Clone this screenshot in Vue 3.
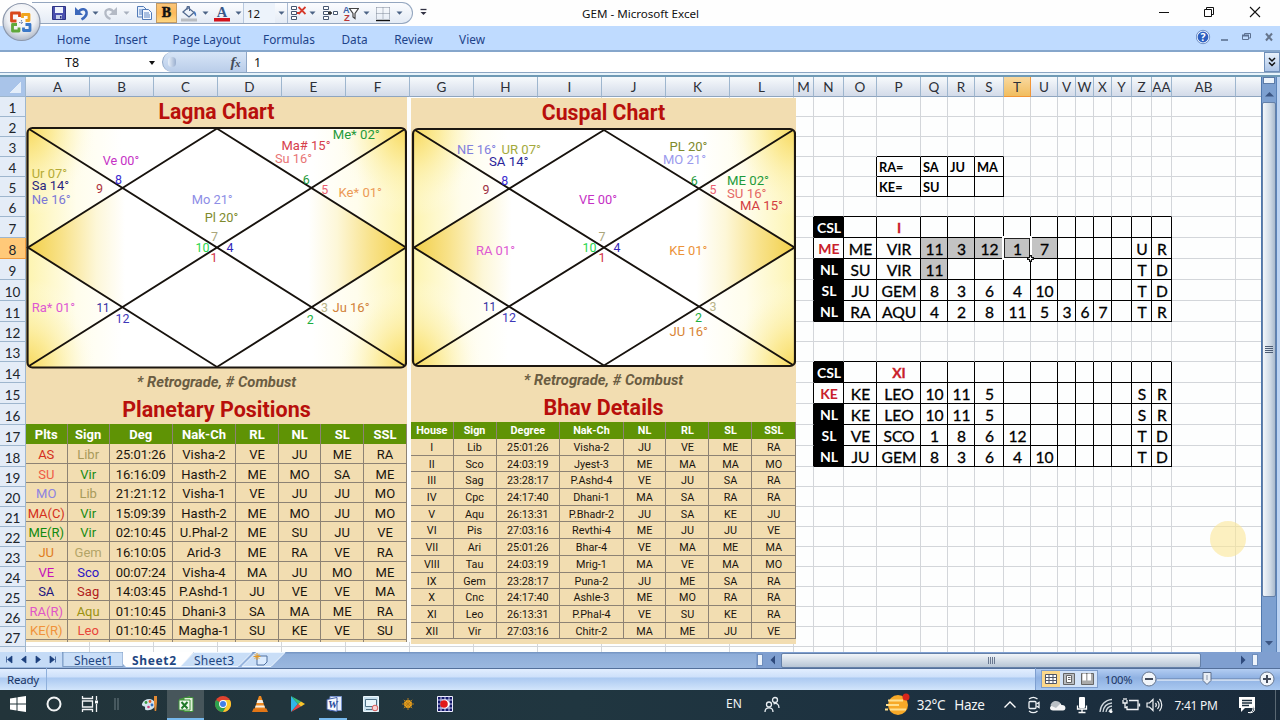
<template>
    <div class="excel">
        <!-- Заголовок окна и панель быстрого доступа -->
        <header class="title-bar">
            <div class="quick-access">
                <span
                    v-for="(item, i) in quickItems"
                    :key="i"
                    :class="['quick-item', item.kind]"
                    :style="{ width: item.w + 'px' }"
                >
                    <svg v-if="item.svg" :width="item.size || 16" height="18" :viewBox="`0 0 ${item.size || 16} 18`" v-html="item.svg"></svg>
                    <template v-else>{{ item.text }}</template>
                </span>
            </div>
            <svg class="customize" width="10" height="10" viewBox="0 0 10 10"><path d="M1.500 1.500h6" stroke="#334" stroke-width="1.300" /><path d="M1.500 4h6l-3 3z" fill="#334" /></svg>
            <div class="window-title">GEM - Microsoft Excel</div>
            <div class="window-buttons">
                <svg width="45" height="24" viewBox="0 0 45 24"><path d="M17 12.500h10" stroke="#111" /></svg>
                <svg width="45" height="24" viewBox="0 0 45 24"><path d="M17.500 9.500h7v7h-7zM19.500 9v-1.500h7v7H25" fill="none" stroke="#111" /></svg>
                <svg width="46" height="24" viewBox="0 0 46 24"><path d="M18 7l10 10M28 7L18 17" stroke="#111" stroke-width="1.100" /></svg>
            </div>
        </header>

        <!-- Кнопка Office -->
        <svg class="office-button" width="42" height="42" viewBox="0 0 42 42">
            <defs>
                <radialGradient id="orb" cx="50%" cy="35%" r="65%">
                    <stop offset="0" stop-color="#fff" />
                    <stop offset=".6" stop-color="#eef0f4" />
                    <stop offset="1" stop-color="#aeb8c8" />
                </radialGradient>
            </defs>
            <circle cx="21.500" cy="21" r="18.500" fill="url(#orb)" stroke="#8c97ab" stroke-width="1.200" />
            <g fill="none" stroke-width="2.800" stroke-linejoin="round">
                <path d="M16.500 20H11.500v-8h8v4" stroke="#d9481c" />
                <path d="M22.500 17v-3.500h6.500v6h-3.500" stroke="#f0a51e" />
                <path d="M17 23.500h-4.500v6.500h6.500v-3.500" stroke="#5fa83a" />
                <path d="M25.500 23.500h4.500v6h-6.500v-3" stroke="#3b78c8" />
            </g>
            <path d="M19 21.500h5M21.500 19v5" stroke="#7a8fb5" stroke-width="1.200" stroke-dasharray="1.500 1" />
        </svg>

        <nav class="ribbon">
            <span v-for="tab in ribbonTabs" :key="tab.name" class="ribbon-tab" :style="{ width: tab.w + 'px' }">{{ tab.name }}</span>
            <svg class="ribbon-controls" width="84" height="24" viewBox="0 0 84 24">
                <circle cx="7" cy="11" r="6" fill="#2c5fc0" stroke="#e9f2ff" stroke-width="1.200" />
                <circle cx="7" cy="11" r="6.700" fill="none" stroke="#4a6fae" stroke-width=".7" />
                <text x="7" y="15" text-anchor="middle" font-size="10.500" font-weight="700" fill="#fff">?</text>
                <path d="M25 14h7" stroke="#5c7191" stroke-width="1.600" />
                <path d="M46.500 9.500h6v4h-6zM48.500 9V7.500h6v4.500H53" fill="none" stroke="#5c7191" /><path d="M46 9.500h7" stroke="#5c7191" stroke-width="2" />
                <path d="M70 7.500l6 7M76 7.500l-6 7" stroke="#66758c" stroke-width="2" />
            </svg>
        </nav>

        <!-- Строка формул -->
        <div class="formula-bar">
            <div class="name-box"><span>T8</span><i class="drop"></i></div>
            <div class="fx-area">
                <i class="knob"></i>
                <span class="fx">f<small>x</small></span>
            </div>
            <div class="formula-text">1</div>
            <div class="expand"><svg width="10" height="12" viewBox="0 0 10 12"><path d="M2 2l3 3 3-3M2 6.500l3 3 3-3" fill="none" stroke="#111" stroke-width="1.500" /></svg></div>
        </div>

        <div class="sheet-area">
            <div class="sheet">
                <div class="col-heads">
                    <span class="corner"></span>
                    <span v-for="col in cols" :key="col.name" :class="['col-head', { active: col.name === 'T' }]" :style="{ width: col.w + 'px' }">{{ col.name }}</span>
                </div>
                <div class="rows">
                    <div v-for="row in rows" :key="row.n" class="row" :style="{ height: row.h + 'px' }">
                        <span :class="['row-head', { active: row.n === 8, tall: row.h === 21 }]">{{ row.n < 28 ? row.n : '' }}</span>
                        <span
                            v-for="cell in row.cells"
                            :key="cell.key"
                            :class="cell.cls"
                            :style="{ width: cell.w + 'px' }"
                        >{{ cell.text }}</span>
                    </div>

                    <!-- Картинки с гороскопами поверх ячеек -->
                    <section class="picture lagna">
                        <h2>Lagna Chart</h2>
                        <svg class="chart" width="381" height="243" viewBox="26 126 381 243">
                            <defs>
                                <linearGradient id="side-l"><stop offset="0" stop-color="#f2cf48" /><stop offset=".3" stop-color="#f8e28a" /><stop offset=".6" stop-color="#fdf7d8" /><stop offset=".85" stop-color="#fff" /></linearGradient>
                                <linearGradient id="side-r"><stop offset=".15" stop-color="#fff" /><stop offset=".4" stop-color="#fdf7d8" /><stop offset=".7" stop-color="#f8e28a" /><stop offset="1" stop-color="#f2cf48" /></linearGradient>
                                <linearGradient id="edges"><stop offset="0" stop-color="#fdf4b0" /><stop offset=".13" stop-color="#fffdec" /><stop offset=".25" stop-color="#fff" /><stop offset=".75" stop-color="#fff" /><stop offset=".87" stop-color="#fffdec" /><stop offset="1" stop-color="#fdf4b0" /></linearGradient>
                                <radialGradient id="corner-glow"><stop offset="0" stop-color="#f7d85c" /><stop offset=".35" stop-color="#fbe88e" stop-opacity=".8" /><stop offset=".7" stop-color="#fdf4c0" stop-opacity=".4" /><stop offset="1" stop-color="#fff" stop-opacity="0" /></radialGradient>
                                <clipPath id="clip-lagna"><rect x="27.500" y="128" width="378" height="239" rx="5" /></clipPath>
                            </defs>
                            <g clip-path="url(#clip-lagna)">
                                <rect x="27" y="127" width="380" height="241" fill="url(#edges)" />
                                <ellipse v-for="(c, i) in corners(27, 406, 128, 367)" :key="i" :cx="c[0]" :cy="c[1]" rx="72" ry="88" fill="url(#corner-glow)" />
                                <path d="M28 247.500L122 188l95 59.500L122 307z" fill="#fff" /><path d="M406 247.500L311 188l-94 59.500L311 307z" fill="#fff" />
                                <path d="M28 247.500L122 188l20 12.500v94L122 307z" fill="url(#side-l)" />
                                <path d="M406 247.500L311 188l-20 12.500v94L311 307z" fill="url(#side-r)" />
                                <path d="M217 128L122 188l95 59.500L311 188zM217 247.500L122 307l95 60 94-60z" fill="#fff" />
                            </g>
                            <path d="M29 129L405 366M405 129L29 366M217 128.500L28 247.500 217 367 406 247.500z" fill="none" stroke="#17120d" stroke-width="1.900" />
                            <rect x="27.500" y="128" width="378.500" height="239.500" rx="5" fill="none" stroke="#1d1710" stroke-width="2.200" />
                            <text v-for="(t, i) in lagnaLabels" :key="i" :x="t[1]" :y="t[2]" :fill="t[3]" :textLength="t[4]" lengthAdjust="spacingAndGlyphs">{{ t[0] }}</text>
                        </svg>
                        <p class="note">* Retrograde, # Combust</p>
                        <h2 class="sub">Planetary Positions</h2>
                        <div class="grid planets">
                            <b v-for="h in planetHead" :key="h">{{ h }}</b>
                            <template v-for="(p, r) in planets" :key="r">
                                <span v-for="(v, c) in p.cells" :key="c" :style="{ color: p.colors[c] }">{{ v }}</span>
                            </template>
                            <i v-for="n in 8" :key="'tail' + n"></i>
                        </div>
                    </section>

                    <section class="picture cuspal">
                        <h2>Cuspal Chart</h2>
                        <svg class="chart" width="385" height="241" viewBox="411 127 385 241">
                            <defs><clipPath id="clip-cuspal"><rect x="413" y="129" width="382" height="237" rx="5" /></clipPath></defs>
                            <g clip-path="url(#clip-cuspal)">
                                <rect x="412" y="128" width="384" height="239" fill="url(#edges)" />
                                <ellipse v-for="(c, i) in corners(413, 795, 129, 366)" :key="i" :cx="c[0]" :cy="c[1]" rx="72" ry="88" fill="url(#corner-glow)" />
                                <path d="M414 247.500L509 188l95 59.500L509 307z" fill="#fff" /><path d="M795 247.500L699 188l-95 59.500L699 307z" fill="#fff" />
                                <path d="M414 247.500L509 188l20 12.500v94L509 307z" fill="url(#side-l)" />
                                <path d="M795 247.500L699 188l-20 12.500v94L699 307z" fill="url(#side-r)" />
                                <path d="M604 130L509 188l95 59.500L699 188zM604 247.500L509 306l95 60 95-60z" fill="#fff" />
                            </g>
                            <path d="M415 130L793 365M793 130L415 365M604 130L414 247.500 604 365.500 794.500 247.500z" fill="none" stroke="#17120d" stroke-width="1.900" />
                            <rect x="413" y="129" width="382" height="237" rx="5" fill="none" stroke="#1d1710" stroke-width="2.200" />
                            <text v-for="(t, i) in cuspalLabels" :key="i" :x="t[1]" :y="t[2]" :fill="t[3]" :textLength="t[4]" lengthAdjust="spacingAndGlyphs">{{ t[0] }}</text>
                        </svg>
                        <p class="note">* Retrograde, # Combust</p>
                        <h2 class="sub">Bhav Details</h2>
                        <div class="grid bhav">
                            <b v-for="h in bhavHead" :key="h">{{ h }}</b>
                            <template v-for="(b, r) in bhav" :key="r">
                                <span v-for="(v, c) in b" :key="c">{{ v }}</span>
                            </template>
                        </div>
                    </section>

                    <!-- Рамка выделенной ячейки и подсветка указателя -->
                    <svg class="selection" width="34" height="28" viewBox="0 0 34 28">
                        <rect x="2" y="2" width="28" height="22" fill="none" stroke="#fff" stroke-width="2" />
                        <rect x="3.500" y="3.500" width="25" height="19" fill="none" stroke="#222" stroke-width="1" />
                        <path d="M29.500 20v7M26 23.500h7" stroke="#111" stroke-width="3" /><path d="M29.500 21.500v4M27.500 23.500h4" stroke="#fff" />
                    </svg>
                    <i class="pointer-spot"></i>
                </div>
            </div>
            <div class="v-scroll">
                <i class="split"></i>
                <svg width="14" height="20" viewBox="0 0 14 20"><path d="M3 12.500h9L7.500 8z" fill="#3c5683" /></svg>
                <div class="v-thumb"><i></i><i></i><i></i><i></i></div>
                <svg class="down" width="14" height="16" viewBox="0 0 14 16"><path d="M3 5h8l-4 4.500z" fill="#3c5683" /></svg>
            </div>
            <div class="edge"></div>
        </div>

        <!-- Ярлыки листов и горизонтальная прокрутка -->
        <div class="tab-strip">
            <svg class="tabs" width="290" height="16" viewBox="0 0 290 16">
                <rect width="62" height="15" fill="#c5dbf6" />
                <path d="M6.500 4.500v6M12 4l-4.500 3.500L12 11zM26 4l-4.500 3.500L26 11zM36 4l4.500 3.500L36 11zM50 4l4.500 3.500L50 11zM55.500 4.500v6" fill="#1c3f7c" stroke="#1c3f7c" stroke-width=".7" />
                <path d="M242 14.500L256 .5h29L271 14.500z" fill="#c9def7" stroke="#eef6ff" />
                <path d="M180 14.500L194 .5h58L238 14.500z" fill="#c9def7" stroke="#eef6ff" />
                <path d="M63 0v14.500h60V0z" fill="#c9def7" stroke="#7f9dc4" />
                <path d="M123 0v12l3 3h54L194 0z" fill="#fff" />
                <path d="M257 4h10v6l-3 3h-7z" fill="#dcecff" stroke="#50709f" />
                <path d="M257 1v7M253.500 4.500h7M254.700 2.200l4.600 4.600M259.300 2.200l-4.600 4.600" stroke="#e79a22" />
                <text x="74" y="12.500" textLength="39">Sheet1</text>
                <text x="132" y="12.500" textLength="44" font-weight="700">Sheet2</text>
                <text x="194" y="12.500" textLength="40">Sheet3</text>
            </svg>
            <div class="h-scroll">
                <i class="h-split"></i>
                <svg width="18" height="16" viewBox="0 0 18 16"><path d="M12 3.500L7.500 8 12 12.500z" fill="#2f4a7c" /></svg>
                <div class="h-thumb"><i></i><i></i><i></i><i></i></div>
                <svg class="right" width="50" height="16" viewBox="0 0 50 16"><path d="M40 3.500L44.500 8 40 12.500z" fill="#2f4a7c" /></svg>
                <i class="h-split"></i>
            </div>
        </div>

        <footer class="status-bar">
            <span class="ready">Ready</span>
            <div class="views">
                <svg width="57" height="18" viewBox="0 0 57 18">
                    <rect x=".5" y=".5" width="56" height="17" fill="#d3e3f8" stroke="#7d9ccb" />
                    <rect x="1" y="1" width="18" height="16" fill="#fcd88b" />
                    <path d="M4.500 4.500h11v9h-11zM8 4.500v9M12 4.500v9M4.500 7.500h11M4.500 10.500h11" fill="#fff" stroke="#4f5566" />
                    <path d="M22.500 3.500h11v11h-11z" fill="#b9bcc0" stroke="#666" /><path d="M25.500 5.500h5v7h-5zM27 7.500h2.500M27 9.500h2.500" fill="#fff" stroke="#666" />
                    <path d="M40.500 3.500h12v11h-12z" fill="#aaa" stroke="#666" /><path d="M41.500 3.500h3.500v7h-3.500zM46.500 3.500h3.500v7h-3.500z" fill="#fff" />
                </svg>
                <span class="percent">100%</span>
                <svg width="142" height="20" viewBox="0 0 142 20">
                    <path d="M19 10h104" stroke="#647fa8" /><path d="M19 11h104" stroke="#fff" />
                    <circle cx="11" cy="10" r="7" fill="#f1f5fa" stroke="#65758e" /><path d="M7 10h8" stroke="#444c5c" stroke-width="2" />
                    <circle cx="129" cy="10" r="7" fill="#f1f5fa" stroke="#65758e" /><path d="M125 10h8M129 6v8" stroke="#444c5c" stroke-width="2" />
                    <path d="M65 3.500h8v8l-4 4-4-4z" fill="#e9eef5" stroke="#5d6f8c" /><path d="M69 6v5" stroke="#8996ab" />
                </svg>
            </div>
        </footer>

        <div class="taskbar">
            <span v-for="(app, i) in apps" :key="i" :class="['app', app.state]" :style="{ width: app.w + 'px' }">
                <svg width="20" height="20" viewBox="0 0 20 20" v-html="app.svg"></svg>
            </span>
            <div class="tray">
                <span class="lang">EN</span>
                <span
                    v-for="(item, i) in tray"
                    :key="i"
                    :class="['tray-item', item.cls]"
                    :style="{ width: item.w + 'px' }"
                >
                    <svg v-if="item.svg" :width="item.size || 20" :height="item.size || 20" :viewBox="`0 0 ${item.size || 20} ${item.size || 20}`" v-html="item.svg"></svg>
                    <template v-else>{{ item.text }}</template>
                </span>
            </div>
        </div>
    </div>
</template>

<script setup>
import { computed } from 'vue';

const ribbonTabs = [
    { name: 'Home', w: 51 },
    { name: 'Insert', w: 64 },
    { name: 'Page Layout', w: 87 },
    { name: 'Formulas', w: 78 },
    { name: 'Data', w: 53 },
    { name: 'Review', w: 65 },
    { name: 'View', w: 52 },
];

const arrow = '<path d="M1.500 7.500h6L4.500 10.800z" fill="#4b6284"/>';

// Панель быстрого доступа
const quickItems = [
    { w: 26, svg: '<path d="M1.500 2.500h13v13h-13z" fill="#4a4fae" stroke="#2e3484"/><path d="M4 3h8v6H4z" fill="#eef2fb"/><path d="M5 11h6v4H5z" fill="#c9d2ea"/><path d="M9 12h1.500v2.500H9z" fill="#2e3484"/>' },
    { w: 17, svg: '<path d="M5 8.500C8 3.500 14.500 4.500 13.500 10c-.5 2.500-2.500 4-5 5.500" fill="none" stroke="#3c68bb" stroke-width="2.600"/><path d="M2 3v8h8z" fill="#3c68bb"/>' },
    { w: 12, size: 9, svg: arrow },
    { w: 20, svg: '<path d="M11 8.500C8 3.500 1.500 4.500 2.500 10c.5 2.500 2.500 4 5 5" fill="none" stroke="#b4bac5" stroke-width="2.300"/><path d="M14 3v8H6z" fill="#b4bac5"/>' },
    { w: 11, size: 9, svg: arrow.replace('#4b6284', '#a8b0bd') },
    { w: 24, svg: '<path d="M1.500 2.500h6l2.500 2.500v8H1.500z" fill="#e8f1fd" stroke="#527bb8"/><path d="M3 6h4M3 8h4M3 10h4" stroke="#5c86c4"/><path d="M6.500 5.500h6l3 3v7h-9z" fill="#f5f9ff" stroke="#527bb8"/><path d="M8 9h5M8 11h6M8 13h6" stroke="#5c86c4"/>' },
    { w: 21, kind: 'bold', text: 'B' },
    { w: 24, svg: '<path d="M2 8l5-4.500 6 5-5 4.500z" fill="#eef3fa" stroke="#51698f" stroke-width="1.300"/><path d="M6 6V2.500h2.500V7" fill="none" stroke="#51698f"/><path d="M13 7c2 1 2.500 3 2 5.500-1.500-1-2.500-3-2-5.500z" fill="#4878bd"/><path d="M0 14.500h16v3H0z" fill="#b9bdc2"/>' },
    { w: 9, size: 9, svg: arrow },
    { w: 24, svg: '<text x="8" y="12.500" text-anchor="middle" font-size="14.500" font-weight="700" fill="#3a5888" font-family="Liberation Serif, serif">A</text><path d="M0 14h16v3.500H0z" fill="#d3131c"/>' },
    { w: 9, size: 9, svg: arrow },
    { w: 32, kind: 'size', text: '12' },
    { w: 12, size: 9, svg: arrow },
    { w: 20, kind: 'sep', svg: '<path d="M1.500 2.500h5v3h-5zM1.500 7.500h5v3h-5zM1.500 12.500h5v3h-5z" fill="#fff" stroke="#46566f"/><path d="M7 9h3M8.500 3l7 7M15.500 3l-7 7" stroke="#d6392b" stroke-width="1.800"/>' },
    { w: 11, size: 9, svg: arrow },
    { w: 23, svg: '<path d="M1.500 2.500h5v3h-5zM1.500 12.500h5v3h-5zM1.500 7.500h5v3h-5zM11.500 7.500h4v3h-4z" fill="#fff" stroke="#46566f"/><path d="M6 9h4M8 7v4" stroke="#222" stroke-width="1.300"/>' },
    { w: 20, svg: '<text x="0" y="8.500" font-size="9" font-weight="700" fill="#3a62a8" font-family="Liberation Sans, sans-serif">A</text><text x="1" y="17" font-size="9.500" font-weight="700" fill="#b8383a" font-family="Liberation Sans, sans-serif">Z</text><path d="M6.500 4.500h9L12 9.500v5l-2-1.500V9.500z" fill="#fff" stroke="#444" stroke-width="1.200"/>' },
    { w: 10, size: 9, svg: arrow },
    { w: 23, svg: '<path d="M1.500 3.500h13M1.500 9.500h13M1.500 3.500v12M8 3.500v12M14.500 3.500v12" fill="none" stroke="#7c8797" stroke-dasharray="1 1"/><path d="M1 16.500h14" stroke="#111" stroke-width="1.400"/>' },
    { w: 10, size: 9, svg: arrow },
];

// Столбцы листа
const cols = [
    ...'ABCDEFGHIJKL'.split('').map(name => ({ name, w: 64 })),
    { name: 'M', w: 20 },
    { name: 'N', w: 30 },
    { name: 'O', w: 33 },
    { name: 'P', w: 44 },
    { name: 'Q', w: 27 },
    { name: 'R', w: 27 },
    { name: 'S', w: 29 },
    { name: 'T', w: 27 },
    { name: 'U', w: 27 },
    { name: 'V', w: 18 },
    { name: 'W', w: 18 },
    { name: 'X', w: 18 },
    { name: 'Y', w: 20 },
    { name: 'Z', w: 20 },
    { name: 'AA', w: 20 },
    { name: 'AB', w: 64 },
    { name: '', w: 26 },
];

// Значения ячеек, начиная со столбца N
const values = {
    4: ['', '', 'RA=', 'SA', 'JU', 'MA'],
    5: ['', '', 'KE=', 'SU'],
    7: ['CSL', '', 'I'],
    8: ['ME', 'ME', 'VIR', 11, 3, 12, 1, 7, '', '', '', '', 'U', 'R'],
    9: ['NL', 'SU', 'VIR', 11, '', '', '', '', '', '', '', '', 'T', 'D'],
    10: ['SL', 'JU', 'GEM', 8, 3, 6, 4, 10, '', '', '', '', 'T', 'D'],
    11: ['NL', 'RA', 'AQU', 4, 2, 8, 11, 5, 3, 6, 7, '', 'T', 'R'],
    14: ['CSL', '', 'XI'],
    15: ['KE', 'KE', 'LEO', 10, 11, 5, '', '', '', '', '', '', 'S', 'R'],
    16: ['NL', 'KE', 'LEO', 10, 11, 5, '', '', '', '', '', '', 'S', 'R'],
    17: ['SL', 'VE', 'SCO', 1, 8, 6, 12, '', '', '', '', '', 'T', 'D'],
    18: ['NL', 'JU', 'GEM', 8, 3, 6, 4, 10, '', '', '', '', 'T', 'D'],
};

// Области с чёрными границами: строки и столбцы
const boxes = [
    [4, 5, 15, 18],
    [7, 11, 13, 26],
    [14, 18, 13, 26],
];

const inBox = (r, c) => boxes.some(b => r >= b[0] && r <= b[1] && c >= b[2] && c <= b[3]);

const rows = computed(() => Array.from({ length: 28 }, (_, i) => {
    const n = i + 1;
    const tall = (n >= 7 && n <= 11) || (n >= 14 && n <= 18);
    return {
        n,
        h: tall ? 21 : 20,
        cells: cols.map((col, c) => {
            const text = values[n]?.[c - 13] ?? '';
            return {
                key: c,
                w: col.w,
                text,
                cls: ['cell', {
                    'line-r': inBox(n, c) || inBox(n, c + 1),
                    'line-b': inBox(n, c) || inBox(n + 1, c),
                    small: n === 4 || n === 5,
                    tag: c === 13 && text !== '',
                    dark: c === 13 && text !== '' && n !== 8 && n !== 15,
                    red: (c === 13 && (n === 8 || n === 15)) || (c === 15 && (n === 7 || n === 14)),
                    shade: (n === 8 && c >= 16 && c <= 20) || (n === 9 && c === 16),
                }],
            };
        }),
    };
}));

const corners = (x1, x2, y1, y2) => [[x1, y1], [x2, y1], [x1, y2], [x2, y2]];

// Подписи: текст, x, y, цвет, ширина
const lagnaLabels = [
    ['Me* 02°', 332.7, 139, '#1f9a3b', 47],
    ['Ma# 15°', 281.5, 149.5, '#d6404c', 49],
    ['Su 16°', 275, 162.8, '#e87575', 37],
    ['Ve 00°', 102.7, 164.7, '#c531c5', 36.5],
    ['Ur 07°', 31.7, 177.7, '#b5ab35', 35.5],
    ['Sa 14°', 31.7, 190.3, '#2a2680', 37.5],
    ['Ne 16°', 31.7, 203.5, '#7b77d6', 39],
    ['8', 115, 183.5, '#3d2ed0', 7],
    ['9', 96, 193, '#ad3440', 7],
    ['Mo 21°', 191.7, 203.5, '#8d8de6', 41],
    ['Pl 20°', 204.7, 222.3, '#7e8a2c', 33.5],
    ['7', 211, 241, '#aaa67b', 7],
    ['10', 195.5, 252, '#26d64c', 14],
    ['4', 226.5, 252, '#3325b8', 7],
    ['1', 210.5, 262, '#d13347', 7],
    ['6', 302.7, 184, '#1f9a3b', 7],
    ['5', 321.3, 193.5, '#ea5f70', 7],
    ['Ke* 01°', 338.5, 197, '#ec9a56', 43.5],
    ['Ra* 01°', 31.7, 311.7, '#dd59d3', 43.5],
    ['11', 96.5, 311.5, '#2f2ba0', 13],
    ['12', 115.5, 323.3, '#3d37b8', 14],
    ['3', 321, 311.5, '#b9b488', 7],
    ['2', 306.7, 323.5, '#1cae3f', 7],
    ['Ju 16°', 332.5, 311.7, '#d18238', 37],
];

const cuspalLabels = [
    ['NE 16°', 457, 153.5, '#8280dd', 39],
    ['UR 07°', 501.5, 153.5, '#a3a93c', 39.5],
    ['SA 14°', 489, 166, '#29259a', 39.5],
    ['8', 501.3, 184.5, '#3d2ed0', 7],
    ['9', 482.5, 193.7, '#9c3044', 7],
    ['VE 00°', 579, 204.3, '#c531c5', 38],
    ['PL 20°', 669.5, 150.7, '#7e8a2c', 38],
    ['MO 21°', 663, 164, '#9b9aed', 43],
    ['6', 690.7, 184.8, '#1f9a3b', 7],
    ['5', 709.5, 193.7, '#ea5f70', 7],
    ['ME 02°', 727, 185, '#1f9a3b', 42],
    ['SU 16°', 727, 197.5, '#e56a66', 39.5],
    ['MA 15°', 740, 210, '#d33c41', 43],
    ['RA 01°', 476, 254.5, '#dd59d3', 39],
    ['7', 598.5, 241, '#aaa67b', 7],
    ['10', 582.5, 252, '#26d64c', 14],
    ['4', 613.5, 252, '#3325b8', 7],
    ['1', 598.5, 261.5, '#d13347', 7],
    ['KE 01°', 669.3, 254.5, '#ec9339', 38],
    ['11', 483, 310.5, '#2f2ba0', 13],
    ['12', 502, 322.3, '#3d37b8', 14],
    ['3', 709.5, 310.7, '#b9b488', 7],
    ['2', 695, 322.3, '#1cae3f', 7],
    ['JU 16°', 669.5, 336, '#d98435', 38.5],
];

const planetHead = ['Plts', 'Sign', 'Deg', 'Nak-Ch', 'RL', 'NL', 'SL', 'SSL'];
const planets = [
    ['AS Libr 25:01:26 Visha-2 VE JU ME RA', '#d42f20', '#a89a5a'],
    ['SU Vir 16:16:09 Hasth-2 ME MO SA ME', '#ef5a45', '#188c12'],
    ['MO Lib 21:21:12 Visha-1 VE JU JU MO', '#8d83e0', '#a89a5a'],
    ['MA(C) Vir 15:09:39 Hasth-2 ME MO JU MO', '#d42f20', '#188c12'],
    ['ME(R) Vir 02:10:45 U.Phal-2 ME SU JU VE', '#108a10', '#188c12'],
    ['JU Gem 16:10:05 Arid-3 ME RA VE RA', '#e07c1c', '#b3a468'],
    ['VE Sco 00:07:24 Visha-4 MA JU MO ME', '#c410bb', '#2b13c4'],
    ['SA Sag 14:03:45 P.Ashd-1 JU VE VE MA', '#1e1680', '#b0201c'],
    ['RA(R) Aqu 01:10:45 Dhani-3 SA MA ME RA', '#e055c8', '#9a9212'],
    ['KE(R) Leo 01:10:45 Magha-1 SU KE VE SU', '#f0923a', '#e8453a'],
].map(([line, a, b]) => ({ cells: line.split(' '), colors: [a, b] }));

const bhavHead = ['House', 'Sign', 'Degree', 'Nak-Ch', 'NL', 'RL', 'SL', 'SSL'];
const bhav = [
    'I Lib 25:01:26 Visha-2 JU VE ME RA',
    'II Sco 24:03:19 Jyest-3 ME MA MA MO',
    'III Sag 23:28:17 P.Ashd-4 VE JU SA RA',
    'IV Cpc 24:17:40 Dhani-1 MA SA RA RA',
    'V Aqu 26:13:31 P.Bhadr-2 JU SA KE JU',
    'VI Pis 27:03:16 Revthi-4 ME JU JU VE',
    'VII Ari 25:01:26 Bhar-4 VE MA ME MA',
    'VIII Tau 24:03:19 Mrig-1 MA VE MA MO',
    'IX Gem 23:28:17 Puna-2 JU ME SA RA',
    'X Cnc 24:17:40 Ashle-3 ME MO RA RA',
    'XI Leo 26:13:31 P.Phal-4 VE SU KE RA',
    'XII Vir 27:03:16 Chitr-2 MA ME JU VE',
].map(line => line.split(' '));

// Значки панели задач
const apps = [
    { w: 36, svg: '<path d="M2 4.500l6.500-1v6H2zM9.500 3.300L18 2v7.500H9.500zM2 10.500h6.500v6L2 15.500zM9.500 10.500H18V18l-8.500-1.200z" fill="#fff"/>' },
    { w: 36, svg: '<circle cx="10" cy="10" r="6.500" fill="none" stroke="#f2f4f5" stroke-width="2"/>' },
    { w: 36, svg: '<path d="M2.500 2v2.500h10V2M2.500 18v-2.500h10V18M2.500 7h10v6h-10zM16.500 2v4M16.500 10v8" fill="none" stroke="#f2f4f5" stroke-width="1.300"/><path d="M15 6.500h3v3h-3z" fill="#fff"/>' },
    { w: 22, svg: '<path d="M6 4v12M9 4v12" stroke="#6d7c83"/>' },
    { w: 37, svg: '<path d="M3 10c2-6 11-7 13-1 1 5-4 8-9 7-2-.5 0-2.500-1.500-3.500C4.500 12 2.500 12 3 10z" fill="#d3e4ee"/><circle cx="7" cy="8.500" r="1.400" fill="#3b9c43"/><circle cx="11" cy="7.500" r="1.400" fill="#e05a2a"/><circle cx="13" cy="11" r="1.400" fill="#3271c2"/><circle cx="9.500" cy="13" r="1.300" fill="#ca3d78"/><path d="M15 2h3v6l-.8 9h-1.500L15 8z" fill="#e28b36"/>' },
    { w: 37, state: 'current', svg: '<path d="M3 5l11-3v16L3 16z" fill="#4a9d3c"/><path d="M8 3.500h9v14H8z" fill="#dff0d8" stroke="#3f8f3a"/><path d="M3 6h11v10H3z" fill="#f3faf0" stroke="#3f8f3a"/><path d="M5.500 8l6 6.500M11.500 8l-6 6.500" stroke="#227a2b" stroke-width="2"/>' },
    { w: 37, svg: '<circle cx="10" cy="10" r="8" fill="#e2432f"/><path d="M3.070 6A8 8 0 0 0 10 18l3.500-6L10 10z" fill="#2da04d"/><path d="M10 18A8 8 0 0 0 16.930 6H10l3.500 6z" fill="#f7c92f"/><circle cx="10" cy="10" r="3.900" fill="#fff"/><circle cx="10" cy="10" r="3" fill="#4080ea"/>' },
    { w: 37, svg: '<path d="M9 2h2l4.500 13h-11z" fill="#ef8a22"/><path d="M7.600 6h4.800l1 3H6.600zM5.800 11.500h8.400l.8 2H5z" fill="#f3efe6"/><path d="M3.500 14.500h13l1.500 3.500H2z" fill="#e27616"/>' },
    { w: 37, svg: '<path d="M4 2v16l7-8z" fill="#30b6e8"/><path d="M4 2l10 5.500-3 2.500z" fill="#38c179"/><path d="M4 18l10-5.500-3-2.500z" fill="#e94545"/><path d="M14 7.500l4 2.500-4 2.500L11 10z" fill="#f9c52c"/>' },
    { w: 37, state: 'open', svg: '<path d="M6 2.500h11.500v14H6z" fill="#e9f0fb" stroke="#7b95cf"/><path d="M3 5.500l10-2v14l-10-2z" fill="#f8fbff" stroke="#4462ac"/><text x="9" y="14" text-anchor="middle" font-size="11" font-style="italic" font-weight="700" fill="#25469b" font-family="Liberation Serif, serif">W</text>' },
    { w: 37, svg: '<path d="M2.500 2.500h15v15h-15z" fill="#c9e1ee" stroke="#eaf5fa"/><path d="M4.500 5.500h11v7h-11zM5 15.500h6" fill="#e9f6fb" stroke="#4e7187"/><circle cx="14" cy="14" r="2.800" fill="#f3d2d2" stroke="#d65a5a"/>' },
    { w: 37, svg: '<circle cx="10" cy="10" r="4" fill="#f1a71c"/><path d="M10 4v12M4 10h12M5.800 5.800l8.400 8.400M14.200 5.800l-8.400 8.400" stroke="#b57d1c" stroke-width="1"/>' },
    { w: 37, svg: '<path d="M2.500 2.500h15v15h-15z" fill="#14186c" stroke="#eef"/><path d="M6 2v16M10 2v16M14 2v16M2 6h16M2 10h16M2 14h16" stroke="#dfe2ff" stroke-width=".9"/><path d="M7 5.500h4c5 2 5 7 0 9H7z" fill="#fff"/><circle cx="9" cy="10" r="3.800" fill="#e01919"/>' },
];

const tray = [
    { w: 128, cls: 'people', svg: '<g fill="none" stroke="#e9eef2" stroke-width="1.300"><circle cx="7" cy="9.500" r="2.500"/><path d="M3 17c0-5.500 8-5.500 8 0"/><circle cx="13" cy="5" r="2.500"/><path d="M11.500 9c3-1.500 5.500 0 5.500 4"/></g>' },
    { w: 33, size: 26, svg: '<circle cx="14" cy="13" r="10" fill="#f7a928"/><path d="M4 8.500h15M2 13h13M6 17.500h16M1 17.500h3" stroke="#ffdf8d" stroke-width="2.200"/><circle cx="22" cy="5" r="3.500" fill="#d8261c"/>' },
    { w: 36, cls: 'text', text: '32°C' },
    { w: 41, cls: 'text haze', text: 'Haze' },
    { w: 32, cls: 'chevron', svg: '<path d="M4.500 12.500L10 7l5.500 5.500" fill="none" stroke="#fff" stroke-width="1.400"/>' },
    { w: 24, svg: '<g fill="none" stroke="#eef2f5" stroke-width="1.300"><rect x="5" y="6.500" width="7" height="7" rx="1"/><path d="M12.500 9l2.500-1.500v5L12.500 11M5 4c2.500-2 6-2 8.500 0M5 16c2.500 2 6 2 8.500 0"/></g>' },
    { w: 24, svg: '<path d="M5 15.500c-4 0-4-5 0-5C6 6 12 6 13.500 10c5-.5 5 5.500 1.500 5.500z" fill="#f4f5f6"/><path d="M2.500 10.500C3 6 9.500 4 12.500 8.500L8 13z" fill="#b9c0c6"/>' },
    { w: 23, svg: '<rect x="7" y="2" width="6" height="11" rx="1" fill="#fff"/><path d="M5.500 10.500v3.500h9v-3.500M10 14v3M6.500 17.500h7" fill="none" stroke="#fff" stroke-width="1.300"/>' },
    { w: 26, svg: '<g fill="none" stroke="#cfd7dd" stroke-width="1.300"><path d="M4 17C4.500 10 9 5 16 4.500M7 17c.5-5 4-8.500 9-9M10 17c.5-3.500 2.500-5.500 6-6M13 17c.3-1.500 1-2.500 3-3"/></g><circle cx="15" cy="16.500" r="1.500" fill="#fff"/>' },
    { w: 23, svg: '<path d="M8 5.500h9v9H6V11M18.500 8.500v3M2 5v3h4V5M3 5V3M5 5V3M4 8v4.500h2" fill="none" stroke="#f1f4f6" stroke-width="1.300"/>' },
    { w: 24, svg: '<path d="M3 8h2.500L9 4.500v11L5.500 12H3z" fill="none" stroke="#f1f4f6" stroke-width="1.200"/><path d="M11.500 8c1 1.200 1 2.800 0 4M13.500 6c2 2.500 2 5.500 0 8M15.500 4c3 3.500 3 8.500 0 12" fill="none" stroke="#f1f4f6" stroke-width="1.200"/>' },
    { w: 60, cls: 'text clock', text: '7:41 PM' },
    { w: 42, svg: '<path d="M2 2h16v11H8l-4 4v-4H2z" fill="#fff"/><path d="M5 5.500h10M5 8h10M5 10.500h7" stroke="#1b2f3e" stroke-width="1.300"/><path d="M11 17.500c4 .5 6-2.500 4.500-6.500 4 2.500 2 8-4.500 6.500z" fill="#1b2f3e" stroke="#fff"/>' },
];
</script>

<style>
body {
    background: #fff;
}
</style>

<style scoped>
.excel {
    width: 1280px;
    height: 720px;
    position: relative;
    display: flex;
    flex-direction: column;
    overflow: hidden;
    font-family: "Noto Sans", "Open Sans", sans-serif;
    color: #111;
}

.excel svg {
    display: block;
    flex: none;
}

i {
    font-style: normal;
}

/* Заголовок */
.title-bar {
    flex: none;
    height: 26px;
    display: flex;
    background: #fefefe;
}

.quick-access {
    flex: none;
    box-sizing: border-box;
    width: 381px;
    height: 22px;
    margin: 2px 0 0 32px;
    padding-left: 14px;
    display: flex;
    align-items: center;
    border: 1px solid #94a6bf;
    border-radius: 0 11px 11px 0;
    border-left: none;
    background: linear-gradient(#fbfcfe, #e4ebf5);
}

.quick-item {
    flex: none;
    height: 20px;
    display: flex;
    align-items: center;
    justify-content: center;
    font-size: 12px;
}

.quick-item.bold {
    background: linear-gradient(#fbc77c, #fdb95a 50%, #fed984);
    box-shadow: 0 0 0 1px #c39a62 inset;
    font: bold 14px "Liberation Serif", serif;
    -webkit-text-stroke: .5px #111;
}

.quick-item.size {
    justify-content: flex-start;
    box-sizing: border-box;
    padding-left: 3px;
    background: #edf3fb;
    border-left: 1px solid #b9c9de;
    font-size: 11.5px;
}

.quick-item.sep {
    box-sizing: border-box;
    border-left: 1px solid #a9bad2;
}

.customize {
    margin: 8px 0 0 6px;
}

.window-title {
    flex: 1;
    padding: 6px 0 0 153px;
    font-size: 11.6px;
    line-height: 15px;
    letter-spacing: 0;
}

.window-buttons {
    display: flex;
    margin-right: 2px;
}

.office-button {
    position: absolute;
    left: 0;
    top: 1px;
    z-index: 2;
}

/* Лента */
.ribbon {
    flex: none;
    height: 24px;
    display: flex;
    padding-left: 48px;
    background: #bfdbff;
    color: #1d4389;
    font-size: 11.8px;
    line-height: 27px;
}

.ribbon-tab {
    flex: none;
    text-align: center;
    white-space: nowrap;
}

.ribbon-controls {
    margin: 0 0 0 auto;
}

/* Строка формул */
.formula-bar {
    flex: none;
    box-sizing: border-box;
    height: 27px;
    display: flex;
    border-top: 2px solid #86a6cb;
    border-bottom: 2px solid #6f9ab5;
    background: linear-gradient(#fff 20px, #8ba5c2 20px, #8ba5c2 21px, #e8f4fb 21px);
    font-size: 12.5px;
    line-height: 22px;
}

.name-box {
    flex: none;
    width: 160px;
    height: 21px;
    display: flex;
    align-items: center;
}

.name-box span {
    width: 144px;
    text-align: center;
}

.drop {
    margin-left: 5px;
    border: 3.5px solid transparent;
    border-top: 4px solid #111;
    border-bottom: none;
}

.fx-area {
    flex: none;
    box-sizing: border-box;
    width: 85px;
    height: 20px;
    margin-left: 2px;
    padding: 0 6px 0 5px;
    display: flex;
    align-items: center;
    justify-content: space-between;
    border: 1px solid #8fa7c7;
    border-width: 0 1px 0 1px;
    border-radius: 10px 0 0 10px;
    background: linear-gradient(#d7e5f7, #b9cde9);
}

.knob {
    width: 8px;
    height: 10px;
    border-radius: 5px;
    background: linear-gradient(90deg, #e9f1fb, #9aafcf);
}

.fx {
    font: italic bold 15px "Liberation Serif", serif;
    color: #444c58;
    letter-spacing: -.5px;
}

.fx small {
    font-size: 11px;
}

.formula-text {
    flex: 1;
    padding-left: 7px;
}

.expand {
    width: 16px;
    height: 20px;
    display: flex;
    align-items: center;
    justify-content: center;
    box-sizing: border-box;
    border: 1px solid #6f8fb9;
    background: linear-gradient(#e8f1fc, #aec6e8);
}

/* Лист */
.sheet-area {
    flex: none;
    height: 575px;
    display: flex;
}

.sheet {
    flex: none;
    width: 1261px;
    overflow: hidden;
}

.col-heads {
    height: 20px;
    display: flex;
}

.corner {
    flex: none;
    box-sizing: border-box;
    width: 26px;
    border-right: 1px solid #9eb6ce;
    border-bottom: 1px solid #9eb6ce;
    background: linear-gradient(135deg, transparent 60%, #e4eefa 60%) 5px 3px / 16px 13px no-repeat, #a9c4e9;
}

.col-head {
    flex: none;
    box-sizing: border-box;
    border-right: 1px solid #9eb6ce;
    border-bottom: 1px solid #8fa5bf;
    background: linear-gradient(#f7fafc, #d3dbe9);
    color: #2c3038;
    font: 13.5px/21px Lato, sans-serif;
    text-align: center;
}

.col-head.active {
    background: linear-gradient(#f9d99f, #f1bd5f);
    border-color: #f29536;
}

.rows {
    position: relative;
    height: 555px;
    overflow: hidden;
    background: #fdfefe;
}

.row {
    display: flex;
}

.row-head {
    flex: none;
    box-sizing: border-box;
    width: 26px;
    border-right: 1px solid #9eb6ce;
    border-bottom: 1px solid #9eb6ce;
    background: #e4ecf7;
    color: #20252c;
    font: 13.5px/22px Lato, sans-serif;
    text-align: center;
}

.row-head.tall {
    line-height: 24px;
}

.row-head.active {
    background: #ffc979;
    border-color: #ee9a3f;
}

.cell {
    flex: none;
    box-sizing: border-box;
    border-right: 1px solid #d3d6da;
    border-bottom: 1px solid #d3d6da;
    font: 400 15.6px/22px Lato, sans-serif;
    text-align: center;
    white-space: nowrap;
    overflow: hidden;
    color: #000;
    padding-left: 1px;
    -webkit-text-stroke: .3px currentColor;
}

.cell.line-r {
    border-right-color: #000;
}

.cell.line-b {
    border-bottom-color: #000;
}

.cell.small {
    padding-left: 2px;
    text-align: left;
    font-size: 12.8px;
    font-weight: 700;
    line-height: 21px;
    -webkit-text-stroke: 0;
}

.cell.tag {
    font-size: 14px;
    font-weight: 700;
    -webkit-text-stroke: 0;
}

.cell.dark {
    background: #000;
    color: #fff;
}

.cell.red {
    color: #c9202b;
    font-size: 14px;
    font-weight: 700;
}

.cell.shade {
    background: #c3c3c3;
}

/* Картинки */
.picture {
    position: absolute;
    display: flex;
    flex-direction: column;
    background: #f2ddb1;
    font-family: Roboto, sans-serif;
    overflow: hidden;
}

.lagna {
    left: 26px;
    top: 0;
    width: 381px;
    height: 545px;
    box-shadow: 4px 0 0 #fcfdfd;
}

.cuspal {
    left: 411px;
    top: 1px;
    width: 385px;
    height: 546px;
}

.picture h2 {
    margin: 0;
    font-size: 21.2px;
    font-weight: 700;
    text-align: center;
    color: #b80f0b;
    height: 29px;
    line-height: 29px;
}

.chart {
    font: 13px Roboto, sans-serif;
}

.note {
    margin: 0;
    height: 26px;
    font-size: 14.8px;
    line-height: 26px;
    font-weight: 700;
    font-style: italic;
    text-align: center;
    color: #6a5c42;
}

.cuspal .note {
    height: 25px;
    line-height: 25px;
}

.picture h2.sub {
    height: 29px;
    line-height: 29px;
    font-size: 21.5px;
}

.grid {
    display: grid;
    text-align: center;
    color: #1b150d;
}

.grid b {
    background: #5f9305;
    color: #fff;
    font-weight: 700;
}

.grid b,
.grid span,
.grid i {
    box-sizing: border-box;
    border-right: 1px solid #8d8274;
    overflow: hidden;
    white-space: nowrap;
}

.grid span {
    border-bottom: 1px solid #8d8274;
}

.planets {
    grid-template-columns: 41.5px 42.3px 63px 63.4px 42.6px 42.6px 42.6px 43px;
    grid-template-rows: 20px repeat(10, 19.6px) 2px;
    font-size: 13px;
    line-height: 21px;
}

.bhav {
    grid-template-columns: 42.5px 43px 63.7px 63.5px 42.8px 43px 43px 43.5px;
    grid-template-rows: 17px repeat(12, 16.7px);
    font-size: 10.8px;
    line-height: 17px;
}

.selection {
    position: absolute;
    left: 1001px;
    top: 138px;
}

.pointer-spot {
    position: absolute;
    left: 1210px;
    top: 424px;
    width: 36px;
    height: 36px;
    border-radius: 50%;
    background: rgba(252, 230, 150, .6);
}

/* Вертикальная прокрутка */
.v-scroll {
    flex: none;
    width: 15px;
    box-sizing: border-box;
    border-left: 1px solid #4f78ae;
    background: #7da0d0;
    display: flex;
    flex-direction: column;
}

.split {
    flex: none;
    height: 7px;
    margin: 0 1px;
    box-sizing: border-box;
    border: 1px solid #5d7ca8;
    background: #edf4fc;
}

.v-thumb {
    box-sizing: border-box;
    height: 495px;
    margin-top: -2px;
    display: flex;
    flex-direction: column;
    align-items: center;
    justify-content: center;
    gap: 1px;
    border: 1px solid #6480a8;
    border-radius: 2px;
    background: linear-gradient(90deg, #f2f6fa, #cfdae6 60%, #a9bacd);
}

.v-thumb i {
    width: 8px;
    height: 1px;
    background: #4c5c75;
}

.down {
    margin-top: auto;
}

.edge {
    flex: 1;
    border-left: 1px solid #5b83b8;
    background: #bcd3f2;
}

/* Ярлыки и горизонтальная прокрутка */
.tab-strip {
    flex: none;
    height: 16px;
    display: flex;
    justify-content: space-between;
    background: linear-gradient(#7797c4 1px, #8eadd8 2px, #9bb8df);
}

.tabs {
    font: 12px "Noto Sans", sans-serif;
    fill: #1e4682;
}

.h-scroll {
    display: flex;
    width: 524px;
    align-items: center;
    background: #7f9fd0;
}

.h-split {
    width: 6px;
    height: 12px;
    box-sizing: border-box;
    border: 1px solid #6f8ebc;
    background: #eef4fb;
    margin-left: 1px;
}

.h-thumb {
    box-sizing: border-box;
    width: 420px;
    height: 15px;
    display: flex;
    align-items: center;
    justify-content: center;
    gap: 1px;
    border: 1px solid #6480a8;
    border-radius: 2px;
    background: linear-gradient(#f1f5f9, #d4dde7 50%, #b7c5d5);
}

.h-thumb i {
    width: 1px;
    height: 7px;
    background: #6a7890;
}

/* Строка состояния */
.status-bar {
    flex: none;
    height: 22px;
    display: flex;
    justify-content: space-between;
    background: linear-gradient(#54709b 1px, #e2eeff 1px, #cde0fa 9px, #abc9f1 10px, #d2e5fb);
    font-size: 11.5px;
    line-height: 23px;
    color: #1a3564;
}

.ready {
    box-sizing: border-box;
    width: 47px;
    padding-left: 7px;
    border-right: 1px solid #8fb0dc;
    letter-spacing: -.2px;
}

.views {
    display: flex;
    align-items: center;
    box-sizing: border-box;
    width: 245px;
    padding-left: 5px;
    border-left: 1px solid #7e9fd0;
    background: linear-gradient(#54709b 1px, #b3cdf2 1px, #8fb1e2 10px, #a9c8f0);
}

.percent {
    width: 41px;
    padding-left: 1px;
    text-align: center;
    font-size: 11.2px;
    letter-spacing: -.3px;
}

/* Панель задач */
.taskbar {
    flex: none;
    height: 30px;
    display: flex;
    background: linear-gradient(90deg, #22343a, #203640 45%, #1c3040 75%, #1a2b3b);
    color: #f3f5f6;
}

.app {
    flex: none;
    box-sizing: border-box;
    height: 30px;
    display: flex;
    align-items: center;
    justify-content: center;
    border-bottom: 2px solid transparent;
}

.app.current {
    background: #47565b;
    border-bottom-color: #76b9ed;
}

.app.open {
    background: linear-gradient(90deg, transparent 4px, #76b9ed 4px, #76b9ed 32px, transparent 32px) 0 28px / 100% 2px no-repeat border-box;
}

.tray {
    margin-left: auto;
    margin-right: 4px;
    padding-right: 7px;
    border-right: 1px solid #5a6873;
    display: flex;
    font-size: 12px;
}

.lang {
    width: 36px;
    text-align: center;
    line-height: 27px;
}

.tray-item {
    display: flex;
    align-items: center;
    justify-content: center;
    height: 30px;
    white-space: nowrap;
}

.tray-item.people {
    justify-content: flex-start;
    box-sizing: border-box;
    padding-left: 10px;
}

.tray-item.chevron {
    box-sizing: border-box;
    padding-left: 8px;
}

.tray-item.text {
    font-size: 13.5px;
    letter-spacing: -.3px;
}

.tray-item.clock {
    font-size: 12px;
}
</style>
